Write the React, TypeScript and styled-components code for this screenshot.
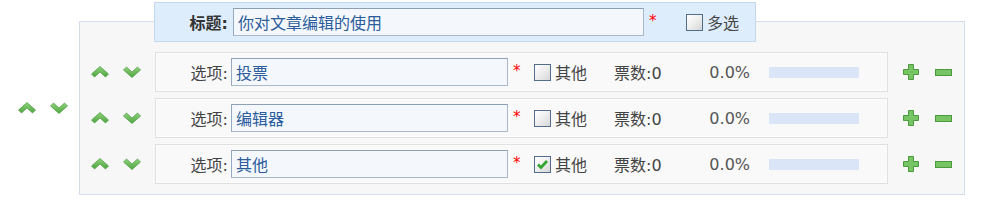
import React from 'react';
import styled, { createGlobalStyle } from 'styled-components';

const GlobalStyle = createGlobalStyle`
  body {
    margin: 0;
    background: #fff;
    font-family: "DejaVu Sans", "Noto Sans CJK SC", sans-serif;
    font-size: 16px;
    color: #444;
  }
`;

// Page holds the outer move arrows and the question panel
const Page = styled.div`
  display: flex;
  align-items: center;
  padding: 21px 0 0 18px;
`;

const MoveGroup = styled.div<{ width: number }>`
  display: flex;
  align-items: center;
  gap: 14px;
  width: ${({ width }) => width}px;
  flex-shrink: 0;
`;

const Panel = styled.div`
  width: 886px;
  box-sizing: border-box;
  border: 1px solid #d3deeb;
  background: #f7f7f7;
  padding: 0 0 10px 11px;
  display: flex;
  flex-direction: column;
`;

const TitleBar = styled.div`
  margin: -20px 0 4px 63px;
  width: 602px;
  height: 40px;
  box-sizing: border-box;
  border: 1px solid #c4d8ee;
  background: #deedfc;
  display: flex;
  align-items: center;
`;

const Label = styled.label<{ width: number; bold?: boolean }>`
  width: ${({ width }) => width}px;
  flex-shrink: 0;
  box-sizing: border-box;
  text-align: right;
  padding-right: ${({ bold }) => (bold ? 5 : 3)}px;
  font-weight: ${({ bold }) => (bold ? 'bold' : 'normal')};
  color: ${({ bold }) => (bold ? '#333' : '#444')};
  white-space: nowrap;
`;

const TextInput = styled.input<{ width: number }>`
  width: ${({ width }) => width}px;
  height: 28px;
  box-sizing: border-box;
  border: 1px solid #a9b9cc;
  border-top-color: #8d9fb5;
  border-left-color: #97a9be;
  background: #f4f7fb;
  color: #2b5c9c;
  font-family: "DejaVu Sans", "Noto Sans CJK SC", sans-serif;
  font-size: 16px;
  padding: 0 4px;
  outline: none;
`;

const Star = styled.span`
  color: #f00;
  font-size: 15px;
  margin: 0 0 3px 5px;
  width: 8px;
`;

const CheckLabel = styled.span<{ gap: number }>`
  display: flex;
  align-items: center;
  gap: 4px;
  margin-left: ${({ gap }) => gap}px;
  color: #444;
  white-space: nowrap;
`;

const Box = styled.span`
  width: 17px;
  height: 17px;
  box-sizing: border-box;
  border: 1px solid #536d8d;
  background: linear-gradient(135deg, #ffffff 0%, #f0f0f0 45%, #d6d6d6 100%);
  display: flex;
  align-items: center;
  justify-content: center;
`;

const OptionLine = styled.div`
  display: flex;
  align-items: center;
  margin-top: 6px;
`;

const OptionBox = styled.div`
  width: 733px;
  height: 40px;
  box-sizing: border-box;
  border: 1px solid #e0e0e0;
  box-shadow: inset 0 0 0 1px #fdfdfd;
  background: #f9f9f9;
  display: flex;
  align-items: center;
`;

const Votes = styled.span`
  width: 60px;
  margin-left: 27px;
  color: #444;
  white-space: nowrap;
`;

const Percent = styled.span`
  width: 76px;
  text-align: right;
  color: #555;
`;

const Bar = styled.div`
  width: 90px;
  height: 11px;
  margin-left: 19px;
  background: #dae5f7;
`;

const Actions = styled.div`
  display: flex;
  align-items: center;
  gap: 16px;
  margin-left: 15px;
`;

const IconButton = styled.span`
  display: flex;
  cursor: pointer;
`;

const Up = () => (
  <IconButton>
    <svg width="18" height="12" viewBox="0 0 18 12">
      <defs>
        <linearGradient id="gu" x1="0" y1="0" x2="0" y2="1">
          <stop offset="0" stopColor="#8fd27c" />
          <stop offset="1" stopColor="#4ea640" />
        </linearGradient>
      </defs>
      <polygon
        points="0.5,8 9,0.5 17.5,8 14.5,11 9,6 3.5,11"
        fill="url(#gu)"
        stroke="#4a9a3e"
        strokeWidth="0.7"
        strokeLinejoin="round"
      />
    </svg>
  </IconButton>
);

const Down = () => (
  <IconButton>
    <svg width="18" height="12" viewBox="0 0 18 12">
      <defs>
        <linearGradient id="gd" x1="0" y1="0" x2="0" y2="1">
          <stop offset="0" stopColor="#8fd27c" />
          <stop offset="1" stopColor="#4ea640" />
        </linearGradient>
      </defs>
      <polygon
        points="0.5,4 3.5,1 9,6 14.5,1 17.5,4 9,11.5"
        fill="url(#gd)"
        stroke="#4a9a3e"
        strokeWidth="0.7"
        strokeLinejoin="round"
      />
    </svg>
  </IconButton>
);

const Plus = () => (
  <IconButton>
    <svg width="16" height="16" viewBox="0 0 16 16">
      <polygon
        points="5.5,0.5 10.5,0.5 10.5,5.5 15.5,5.5 15.5,10.5 10.5,10.5 10.5,15.5 5.5,15.5 5.5,10.5 0.5,10.5 0.5,5.5 5.5,5.5"
        fill="#77c465"
        stroke="#4c9a40"
        strokeWidth="1"
      />
    </svg>
  </IconButton>
);

const Minus = () => (
  <IconButton>
    <svg width="17" height="7" viewBox="0 0 17 7">
      <rect x="0.5" y="0.5" width="16" height="6" fill="#77c465" stroke="#4c9a40" strokeWidth="1" />
    </svg>
  </IconButton>
);

const Tick = () => (
  <svg width="13" height="11" viewBox="0 0 13 11">
    <polyline points="2,5.5 5,8.5 11,2" fill="none" stroke="#2da52d" strokeWidth="2.6" />
  </svg>
);

const Checkbox: React.FC<{ checked?: boolean; text: string; gap: number }> = ({ checked, text, gap }) => (
  <CheckLabel gap={gap}>
    <Box>{checked && <Tick />}</Box>
    {text}
  </CheckLabel>
);

const options = [
  { text: '投票', other: false },
  { text: '编辑器', other: false },
  { text: '其他', other: true },
];

const App: React.FC = () => {
  return (
    <>
      <GlobalStyle />
      <Page>
        <MoveGroup width={61}>
          <Up />
          <Down />
        </MoveGroup>
        <Panel>
          <TitleBar>
            <Label width={78} bold>
              标题:
            </Label>
            <TextInput width={411} defaultValue="你对文章编辑的使用" />
            <Star>*</Star>
            <Checkbox text="多选" gap={29} />
          </TitleBar>
          {options.map((o, i) => (
            <OptionLine key={i}>
              <MoveGroup width={64}>
                <Up />
                <Down />
              </MoveGroup>
              <OptionBox>
                <Label width={75}>选项:</Label>
                <TextInput width={277} defaultValue={o.text} />
                <Star>*</Star>
                <Checkbox text="其他" checked={o.other} gap={13} />
                <Votes>票数:0</Votes>
                <Percent>0.0%</Percent>
                <Bar />
              </OptionBox>
              <Actions>
                <Plus />
                <Minus />
              </Actions>
            </OptionLine>
          ))}
        </Panel>
      </Page>
    </>
  );
};

export default App;
